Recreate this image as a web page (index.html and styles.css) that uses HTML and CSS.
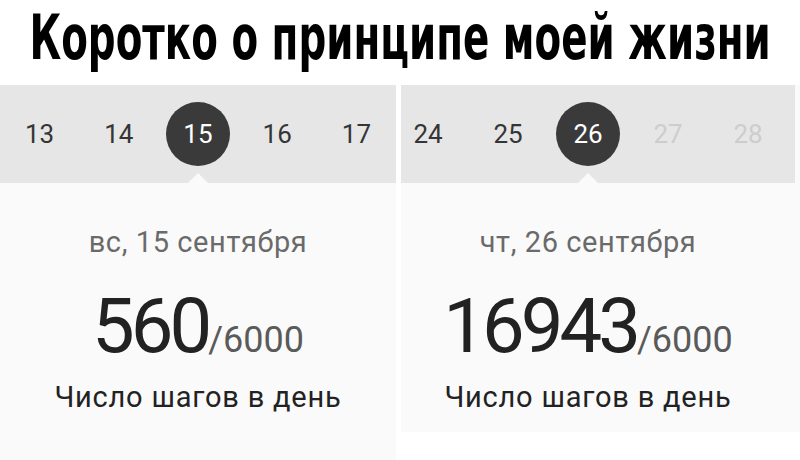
FILE: index.html
```html
<!DOCTYPE html>
<html lang="ru">
  <head>
    <meta charset="UTF-8" />
    <meta name="viewport" content="width=device-width, initial-scale=1.0" />
    <title>Коротко о принципе моей жизни</title>
    <link rel="stylesheet" href="styles.css">
  </head>
  <body>
    <h1 class="title"><span>Коротко о принципе моей жизни</span></h1>
    <main class="panels">
      <article class="card card-left">
        <div class="days">
          <div class="day">13</div>
          <div class="day">14</div>
          <div class="day active"><span>15</span></div>
          <div class="day">16</div>
          <div class="day">17</div>
        </div>
        <div class="info">
          <p class="date">вс, 15 сентября</p>
          <p class="steps"><span class="num">560</span><span class="goal">/6000</span></p>
          <p class="label">Число шагов в день</p>
        </div>
      </article>
      <article class="card card-right">
        <div class="days">
          <div class="day">24</div>
          <div class="day">25</div>
          <div class="day active"><span>26</span></div>
          <div class="day future">27</div>
          <div class="day future">28</div>
        </div>
        <div class="info">
          <p class="date">чт, 26 сентября</p>
          <p class="steps"><span class="num">16943</span><span class="goal">/6000</span></p>
          <p class="label">Число шагов в день</p>
        </div>
      </article>
    </main>
  </body>
</html>
```

FILE: styles.css
```css
* {
  margin: 0;
  padding: 0;
  box-sizing: border-box;
}
body {
  width: 800px;
  height: 460px;
  overflow: hidden;
  background: #fff;
  font-family: Roboto, "Noto Sans", sans-serif;
}
.title {
  display: flex;
  justify-content: center;
  height: 85px;
  white-space: nowrap;
  font-family: "DejaVu Sans", sans-serif;
  font-stretch: condensed;
  font-weight: bold;
  font-size: 63px;
  line-height: 76px;
  color: #000;
  overflow: hidden;
}
.title span {
  flex: none;
  transform: scaleX(0.685);
}
.panels {
  display: flex;
  align-items: flex-start;
}
.card {
  overflow: hidden;
  background: #fafafa;
}
.card-left {
  width: 396px;
  height: 375px;
}
.card-right {
  flex: 1;
  margin-left: 5px;
  height: 347px;
}
.days {
  display: grid;
  grid-template-columns: repeat(5, 1fr);
  height: 98px;
  background: #e6e6e6;
  font-size: 26px;
  color: #353535;
}
.card-right .days {
  grid-template-columns: repeat(5, 80px);
  width: 407px;
  margin-left: -13px;
}
.day {
  position: relative;
  display: flex;
  align-items: center;
  justify-content: center;
}
.day.future {
  color: #cdcdcd;
}
.day.active span {
  display: flex;
  align-items: center;
  justify-content: center;
  width: 64px;
  height: 64px;
  border-radius: 50%;
  background: #3a3a3a;
  color: #fff;
}
.day.active::after {
  content: "";
  position: absolute;
  left: 50%;
  bottom: 0;
  margin-left: -10px;
  border: 10px solid transparent;
  border-top: 0;
  border-bottom: 10px solid #fafafa;
}
.info {
  text-align: center;
  padding-top: 43px;
}
.card-right .info {
  padding-right: 25px;
}
.date {
  font-size: 29px;
  line-height: 32px;
  letter-spacing: 0.6px;
  color: #6a6a6a;
}
.steps {
  margin-top: 28px;
  height: 80px;
  line-height: 80px;
  color: #222;
}
.num {
  font-size: 76px;
  letter-spacing: -4px;
}
.goal {
  font-size: 36px;
  line-height: 1;
  color: #5a5a5a;
}
.label {
  margin-top: 14px;
  font-size: 29px;
  line-height: 34px;
  letter-spacing: 0.8px;
  color: #222;
}
```
